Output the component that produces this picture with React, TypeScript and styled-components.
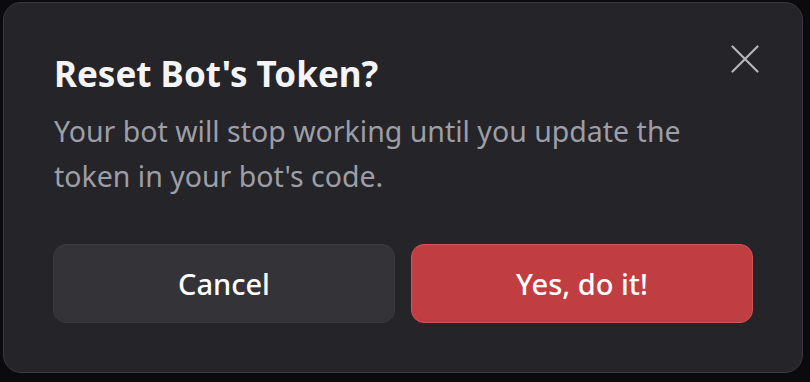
import React from "react";
import styled, { createGlobalStyle } from "styled-components";

const Global = createGlobalStyle`
  html, body { margin: 0; padding: 0; background: #0b0b0d; }
  body { font-family: "Noto Sans", "Open Sans", sans-serif; }
  * { box-sizing: border-box; }
`;

const Page = styled.div`
  width: 810px;
  height: 382px;
  padding: 2px 7px 9px 3px;
  background: #0b0b0d;
`;

const Modal = styled.div`
  width: 800px;
  height: 371px;
  background: #242429;
  border: 1px solid #38383e;
  border-radius: 18px;
  padding: 48px 49px 49px 49px;
  display: flex;
  flex-direction: column;
`;

const Header = styled.div`
  display: flex;
  justify-content: space-between;
  align-items: flex-start;
`;

const Title = styled.h1`
  margin: 0;
  color: #f4f4f6;
  font-size: 35px;
  font-weight: 700;
  line-height: 46px;
  padding-left: 1px;
`;

const Close = styled.button`
  background: none;
  border: none;
  padding: 0;
  width: 28px;
  height: 28px;
  margin-top: -6px;
  margin-right: -6px;
  color: #b5b6bd;
  display: flex;
  cursor: pointer;
`;

const Body = styled.p`
  margin: 12px 0 0;
  color: #9d9ea6;
  font-size: 28.5px;
  line-height: 45px;
  padding-left: 1px;
  max-width: 680px;
`;

const Actions = styled.div`
  margin-top: auto;
  display: grid;
  grid-template-columns: 1fr 1fr;
  gap: 16px;
`;

const Button = styled.button<{ $danger?: boolean }>`
  height: 79px;
  border-radius: 13px;
  font-family: inherit;
  font-size: 29px;
  font-weight: 500;
  color: #ffffff;
  background: ${(p) => (p.$danger ? "#c03e42" : "#333338")};
  border: 1px solid ${(p) => (p.$danger ? "#d0555a" : "#3a3a40")};
  cursor: pointer;
`;

export default function App() {
  return (
    <>
      <Global />
      <Page>
        <Modal>
          <Header>
            <Title>Reset Bot's Token?</Title>
            <Close aria-label="Close">
              <svg width="28" height="28" viewBox="0 0 28 28" fill="none">
                <path d="M1.5 1.5 L26.5 26.5 M26.5 1.5 L1.5 26.5" stroke="currentColor" strokeWidth="2.2" strokeLinecap="round" />
              </svg>
            </Close>
          </Header>
          <Body>Your bot will stop working until you update the token in your bot's code.</Body>
          <Actions>
            <Button>Cancel</Button>
            <Button $danger>Yes, do it!</Button>
          </Actions>
        </Modal>
      </Page>
    </>
  );
}
